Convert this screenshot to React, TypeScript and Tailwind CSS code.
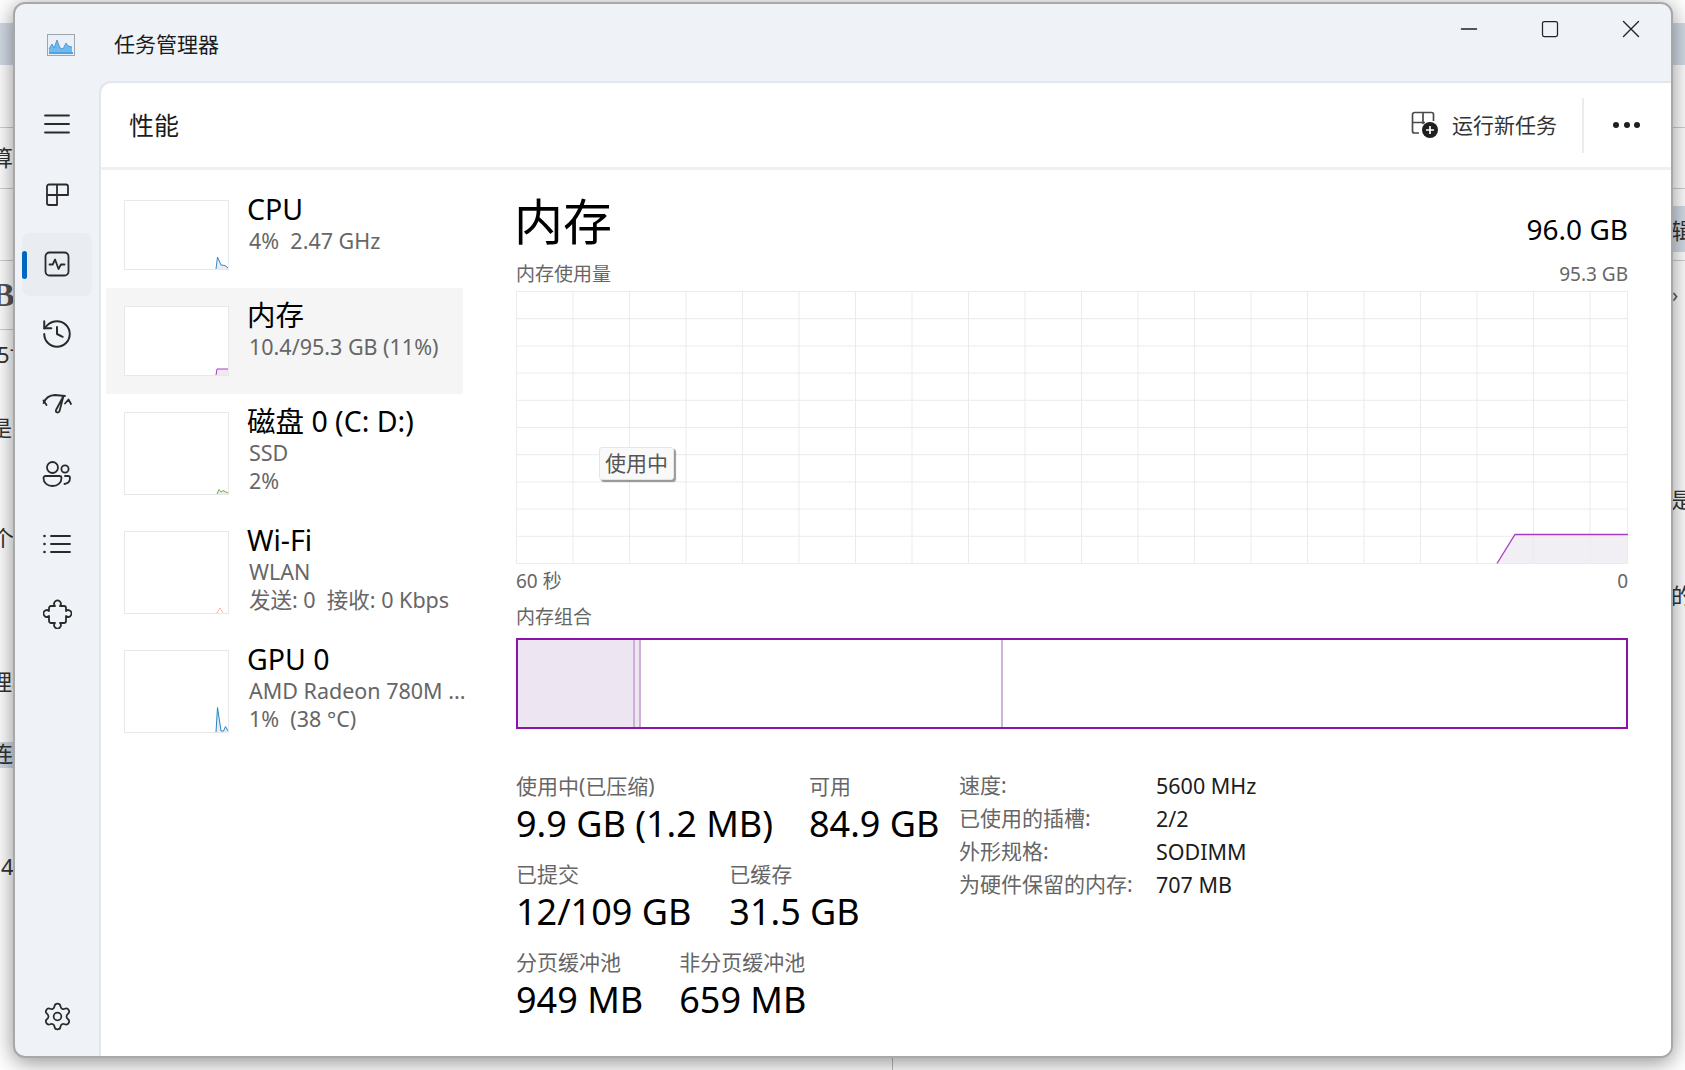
import React from 'react';
import { History, Settings, Minus, Square, X } from 'lucide-react';

const MenuIcon = () => (
  <svg width="28" height="22" viewBox="0 0 28 22" fill="none" stroke="#2a2a2a" strokeWidth="1.8" strokeLinecap="round">
    <path d="M2 2.5h24M2 11h24M2 19.5h24" />
  </svg>
);

const PanelsIcon = () => (
  <svg width="26" height="26" viewBox="0 0 26 26" fill="none" stroke="#2a2a2a" strokeWidth="1.8" strokeLinejoin="round">
    <path d="M3 5.5a2 2 0 0 1 2-2h17a2 2 0 0 1 2 2v8.5H13V3.5M3 5.5V22a2 2 0 0 0 2 2h8V14H3" />
  </svg>
);

const PulseIcon = () => (
  <svg width="26" height="26" viewBox="0 0 26 26" fill="none" stroke="#2a2a2a" strokeWidth="1.8" strokeLinejoin="round" strokeLinecap="round">
    <rect x="1.5" y="1.5" width="23" height="23" rx="4" />
    <path d="M5.5 13.5h3.2l2.4-5 3.4 9.5 2.4-4.5h3.6" />
  </svg>
);

const GaugeIcon = () => (
  <svg width="31" height="24" viewBox="0 0 31 24" fill="none" stroke="#2a2a2a" strokeWidth="1.8" strokeLinejoin="round" strokeLinecap="round">
    <path d="M1.5 11A13 13 0 0 1 13 3l10 1" />
    <path d="M1.5 8.500l3 4.500" />
    <path d="M21.5 4L14 18c-.8 2 1.600 3.500 3.400 1.500z" />
    <path d="M23 11.500l3.500-4 2.500 4.500" />
  </svg>
);

const UsersIcon = () => (
  <svg width="30" height="28" viewBox="0 0 30 28" fill="none" stroke="#2a2a2a" strokeWidth="1.8" strokeLinecap="round">
    <circle cx="10.5" cy="7.5" r="5.5" />
    <circle cx="23" cy="9" r="3.6" />
    <path d="M3.5 16h14a2 2 0 0 1 2 2c0 5-4 8-9 8s-9-3-9-8a2 2 0 0 1 2-2z" />
    <path d="M23 16h3a2 2 0 0 1 2 2c0 3-2 5.500-5.500 6" />
  </svg>
);

const ListIcon = () => (
  <svg width="30" height="20" viewBox="0 0 30 20" fill="none" stroke="#2a2a2a" strokeWidth="1.8" strokeLinecap="round">
    <path d="M9 2h19M9 10h19M9 18h19" />
    <circle cx="2.500" cy="2" r="1.300" fill="#2a2a2a" stroke="none" />
    <circle cx="2.500" cy="10" r="1.300" fill="#2a2a2a" stroke="none" />
    <circle cx="2.500" cy="18" r="1.300" fill="#2a2a2a" stroke="none" />
  </svg>
);

const PuzzleIcon = () => (
  <svg width="29" height="30" viewBox="0 0 29 30" fill="none" stroke="#2a2a2a" strokeWidth="1.8" strokeLinejoin="round">
    <path d="M12 7a3.300 3.300 0 1 1 5 0h4a2 2 0 0 1 2 2v3a3.300 3.300 0 1 1 0 5v5a2 2 0 0 1-2 2h-4a3.300 3.300 0 1 1-5 0H8a2 2 0 0 1-2-2v-5a3.300 3.300 0 1 1 0-5V9a2 2 0 0 1 2-2z" />
  </svg>
);

const RunTaskIcon = () => (
  <svg width="28" height="28" viewBox="0 0 28 28" fill="none">
    <path d="M8 22H3.500a2 2 0 0 1-2-2V3.500a2 2 0 0 1 2-2h17a2 2 0 0 1 2 2V10M12 2v11M2 11.500h10M12 11.500h2" stroke="#4a4a4a" strokeWidth="1.7" />
    <circle cx="19" cy="19" r="8" fill="#1f1f1f" />
    <path d="M19 15v8M15 19h8" stroke="#fff" strokeWidth="1.700" />
  </svg>
);

const AppIcon = () => (
  <svg width="28" height="22" viewBox="0 0 28 22">
    <rect x="0.500" y="0.500" width="27" height="21" fill="#eaf0f6" stroke="#9ea6ad" />
    <path d="M2 19V15l3-5 2 4 3-8 3 8 3 1 3-6 2 3 4 1v6z" fill="#6fb9ee" />
    <path d="M2 15l3-5 2 4 3-8 3 8 3 1 3-6 2 3 4 1" fill="none" stroke="#3a8fd0" strokeWidth="0.800" />
    <rect x="2" y="18" width="24" height="2" fill="#4ba3e3" />
  </svg>
);

type Spark = { line: string; fill?: string; stroke: string; dashed?: boolean };

const Thumb = ({ h, spark }: { h: number; spark: Spark }) => (
  <div className="w-[105px] shrink-0 border border-[#e8e8e8] bg-white" style={{ height: h }}>
    <svg width="103" height={h - 2} viewBox={`0 0 103 ${h - 2}`}>
      {spark.fill && <path d={spark.fill} fill="#eeeaf0" />}
      <path d={spark.line} fill="none" stroke={spark.stroke} strokeWidth="1" strokeDasharray={spark.dashed ? '1 1' : undefined} />
    </svg>
  </div>
);

const rows = [
  {
    key: 'cpu',
    name: 'CPU',
    sub: ['4%  2.47 GHz'],
    h: 106,
    thumb: 70,
    spark: { line: 'M91 68L92.500 56L96 64L100 64.500L103 67', fill: 'M91 68L92.500 56L96 64L100 64.500L103 67V68Z', stroke: '#2f8fc9' },
  },
  {
    key: 'mem',
    name: '内存',
    sub: ['10.4/95.3 GB (11%)'],
    h: 106,
    thumb: 70,
    active: true,
    spark: { line: 'M91 68L92 62H103', fill: 'M91 68L92 62H103V68Z', stroke: '#a93cc8' },
  },
  {
    key: 'disk',
    name: '磁盘 0 (C: D:)',
    sub: ['SSD', '2%'],
    h: 119,
    thumb: 83,
    spark: { line: 'M92 81L94 76.500L96 79L98 77.500L100 78.500L103 80', fill: 'M92 81L94 76.500L96 79L98 77.500L100 78.500L103 80V81Z', stroke: '#6db33f' },
  },
  {
    key: 'wifi',
    name: 'Wi-Fi',
    sub: ['WLAN', '发送: 0  接收: 0 Kbps'],
    h: 119,
    thumb: 83,
    spark: { line: 'M92 81L95 76L98 81', stroke: '#ef7f4d', dashed: true },
  },
  {
    key: 'gpu',
    name: 'GPU 0',
    sub: ['AMD Radeon 780M ...', '1%  (38 °C)'],
    h: 119,
    thumb: 83,
    spark: { line: 'M91 81L92.500 56.500L96 80L98.500 80L100.500 75.500L103 80', fill: 'M91 81L92.500 56.500L96 80L98.500 80L100.500 75.500L103 80V81Z', stroke: '#1f88c4' },
  },
];

const navIcons = [
  <PanelsIcon />,
  <PulseIcon />,
  <History size={34} strokeWidth={1.400} color="#2a2a2a" />,
  <GaugeIcon />,
  <UsersIcon />,
  <ListIcon />,
  <PuzzleIcon />,
];

const Stat = ({ label, value }: { label: string; value: string }) => (
  <div className="whitespace-nowrap">
    <div className="h-[27px] text-[21px] leading-[26px] text-[#666]">{label}</div>
    <div className="h-[48px] text-[36px] leading-[48px] text-black">{value}</div>
  </div>
);

const specs = [
  ['速度:', '5600 MHz'],
  ['已使用的插槽:', '2/2'],
  ['外形规格:', 'SODIMM'],
  ['为硬件保留的内存:', '707 MB'],
];

// bits of the window behind, only visible around the edges
const behindLeft = [
  { top: 142, left: -9, text: '算' },
  { top: 339, left: -3, text: '5寸' },
  { top: 412, left: -10, text: '是黄' },
  { top: 522, left: -8, text: '个日' },
  { top: 666, left: -10, text: '理程' },
  { top: 738, left: -9, text: '连接' },
  { top: 851, left: 1, text: '4' },
];

const behindRight = [
  { top: 215, left: 1671, text: '辑' },
  { top: 484, left: 1671, text: '是' },
  { top: 580, left: 1671, text: '的' },
];

export default function App() {
  const gridX = Array.from({ length: 20 }, (_, i) => 0.5 + i * 56.5);
  const gridY = Array.from({ length: 11 }, (_, i) => 0.5 + i * 27.2);

  return (
    <div className="relative h-[1070px] w-[1685px] overflow-hidden bg-white pl-[13px] pt-[2px] font-['Noto_Sans','Noto_Sans_CJK_SC',sans-serif]">
      <div className="absolute left-0 top-[23px] h-[42px] w-full bg-[#d3dbe6]" />
      <div className="absolute left-[1660px] top-[206px] h-[46px] w-[25px] bg-[#d3dbe6]" />
      <div className="absolute left-0 top-[742px] h-[26px] w-[20px] bg-[#d3dbe6]" />
      <div className="absolute left-0 top-[127px] h-px w-full bg-[#cfcfcf]" />
      <div className="absolute left-0 top-[188px] h-px w-full bg-[#cfcfcf]" />
      <div className="absolute left-0 top-[260px] h-px w-full bg-[#cfcfcf]" />
      <div className="absolute left-0 top-[329px] h-px w-[20px] bg-[#cfcfcf]" />
      <div className="absolute left-[892px] top-[1050px] h-[20px] w-px bg-[#bbb]" />
      {behindLeft.map((b) => (
        <span key={b.top} className="absolute text-[22px] leading-[30px] text-[#333]" style={{ top: b.top, left: b.left }}>
          {b.text}
        </span>
      ))}
      <span className="absolute left-[-8px] top-[275px] font-['Liberation_Serif',serif] text-[34px] font-bold leading-[40px] text-[#555]">B</span>
      <span className="absolute left-[1672px] top-[282px] text-[20px] leading-[26px] text-[#555]">›</span>
      {behindRight.map((b) => (
        <span key={b.top} className="absolute text-[22px] leading-[30px] text-[#333]" style={{ top: b.top, left: b.left }}>
          {b.text}
        </span>
      ))}

      <div className="relative flex h-[1056px] w-[1660px] flex-col overflow-hidden rounded-[12px] border-2 border-[#a8a8a8] bg-[#eff3f8] shadow-[0_4px_22px_rgba(0,0,0,0.45)]">
        {/* title bar */}
        <div className="flex h-[77px] shrink-0 items-start">
          <div className="mt-[30px] ml-[32px] flex h-[22px] items-center">
            <AppIcon />
          </div>
          <div className="ml-[39px] mt-[25px] text-[21px] leading-[30px] text-[#1c1c1c]">任务管理器</div>
          <div className="ml-auto flex">
            <div className="flex h-[50px] w-[81px] items-center justify-center">
              <Minus size={26} strokeWidth={1.200} color="#222" />
            </div>
            <div className="flex h-[50px] w-[81px] items-center justify-center">
              <Square size={20} strokeWidth={1.500} color="#222" />
            </div>
            <div className="flex h-[50px] w-[81px] items-center justify-center">
              <X size={30} strokeWidth={1.100} color="#222" />
            </div>
          </div>
        </div>

        <div className="flex min-h-0 flex-1">
          {/* sidebar */}
          <div className="flex w-[84px] shrink-0 flex-col pt-[8px] pb-[5px]">
            <div className="flex h-[70px] items-center justify-center">
              <MenuIcon />
            </div>
            {navIcons.map((icon, i) => (
              <div key={i} className="flex h-[70px] items-center px-[7px]">
                <div className={`relative flex h-[63px] w-full items-center justify-center rounded-[8px] ${i === 1 ? 'bg-[#e9edf2]' : ''}`}>
                  {i === 1 && <div className="absolute left-0 top-[18px] h-[28px] w-[5px] rounded-full bg-[#0067c0]" />}
                  {icon}
                </div>
              </div>
            ))}
            <div className="mt-auto flex h-[70px] items-center justify-center">
              <Settings size={31} strokeWidth={1.350} color="#2a2a2a" />
            </div>
          </div>

          {/* main panel */}
          <div className="flex min-w-0 flex-1 flex-col rounded-tl-[12px] border-l-2 border-t-2 border-[#e2e7ed] bg-white">
            <div className="flex h-[87px] shrink-0 items-center border-b-[3px] border-[#f0f0f0] pl-[28px]">
              <div className="text-[25px] leading-[34px] text-[#1c1c1c]">性能</div>
              <div className="ml-auto flex items-center">
                <RunTaskIcon />
                <div className="ml-[13px] text-[21px] leading-[30px] text-[#333]">运行新任务</div>
                <div className="ml-[25px] h-[55px] w-[2px] bg-[#ececec]" />
                <div className="ml-[29px] mr-[31px] flex gap-[4.500px]">
                  <div className="h-[6px] w-[6px] rounded-full bg-[#1f1f1f]" />
                  <div className="h-[6px] w-[6px] rounded-full bg-[#1f1f1f]" />
                  <div className="h-[6px] w-[6px] rounded-full bg-[#1f1f1f]" />
                </div>
              </div>
            </div>

            <div className="flex min-h-0 flex-1">
              {/* device list */}
              <div className="w-[415px] shrink-0 pl-[5px] pt-[12px]">
                {rows.map((r) => (
                  <div
                    key={r.key}
                    className={`flex w-[357px] items-start gap-[18px] whitespace-nowrap pl-[18px] pt-[18px] ${r.active ? 'bg-[#f5f5f5]' : ''}`}
                    style={{ height: r.h }}
                  >
                    <Thumb h={r.thumb} spark={r.spark} />
                    <div className="-mt-[9px]">
                      <div className="h-[36px] text-[28.500px] leading-[36px] text-black">{r.name}</div>
                      {r.sub.map((s) => (
                        <div key={s} className="ml-[2px] h-[28px] whitespace-pre text-[21.500px] leading-[28px] text-[#666]">
                          {s}
                        </div>
                      ))}
                    </div>
                  </div>
                ))}
              </div>

              {/* detail */}
              <div className="w-[1112px] pt-[21px]">
                <div className="flex h-[60px] items-end justify-between">
                  <div className="-ml-[2px] text-[49px] leading-[60px] text-black">内存</div>
                  <div className="mb-[4px] text-[28px] leading-[36px] text-black">96.0 GB</div>
                </div>
                <div className="mt-[11px] flex h-[24px] justify-between text-[19px] leading-[24px] text-[#666]">
                  <div>内存使用量</div>
                  <div>95.3 GB</div>
                </div>

                <div className="relative mt-[5px] h-[274px]">
                  <svg width="1112" height="274" viewBox="0 0 1112 274" className="block">
                    <path d="M981 272.500L999 243.500H1111.500V272.500Z" fill="#f1eff3" />
                    {gridX.map((x) => (
                      <line key={x} x1={x} y1="0" x2={x} y2="273" stroke="#ebebeb" strokeWidth="1" />
                    ))}
                    <line x1="1111.500" y1="0" x2="1111.500" y2="273" stroke="#ebebeb" strokeWidth="1" />
                    {gridY.map((y) => (
                      <line key={y} x1="0" y1={y} x2="1112" y2={y} stroke="#ebebeb" strokeWidth="1" />
                    ))}
                    <path d="M981 272.500L999 243.500H1112" fill="none" stroke="#a93cc8" strokeWidth="1.300" />
                  </svg>
                  <div className="absolute left-[83px] top-[156px] h-[33px] w-[75px] rounded-[3px] border border-[#e6e6e6] bg-[#f9f9f9] text-center text-[21px] leading-[31px] text-[#555] shadow-[2px_2px_1px_rgba(0,0,0,0.4)]">
                    使用中
                  </div>
                </div>

                <div className="mt-[4px] flex h-[24px] justify-between text-[19px] leading-[24px] text-[#666]">
                  <div>60 秒</div>
                  <div>0</div>
                </div>
                <div className="mt-[12px] h-[24px] text-[19px] leading-[24px] text-[#666]">内存组合</div>

                <div className="mt-[9px] flex h-[91px] border-2 border-[#8a14aa]">
                  <div className="w-[115px] bg-[#ede5f1]" />
                  <div className="w-[2px] bg-[#cfaed9]" />
                  <div className="w-[4px] bg-[#ede5f1]" />
                  <div className="w-[2px] bg-[#cfaed9]" />
                  <div className="w-[360px]" />
                  <div className="w-[2px] bg-[#ccb5d9]" />
                </div>

                <div className="mt-[44px] flex">
                  <div className="flex w-[443px] shrink-0 flex-col gap-[13px]">
                    <div className="flex gap-[36px]">
                      <Stat label="使用中(已压缩)" value="9.9 GB (1.2 MB)" />
                      <Stat label="可用" value="84.9 GB" />
                    </div>
                    <div className="flex gap-[38px]">
                      <Stat label="已提交" value="12/109 GB" />
                      <Stat label="已缓存" value="31.5 GB" />
                    </div>
                    <div className="flex gap-[36px]">
                      <Stat label="分页缓冲池" value="949 MB" />
                      <Stat label="非分页缓冲池" value="659 MB" />
                    </div>
                  </div>
                  <div className="-mt-[4px]">
                    {specs.map(([k, v]) => (
                      <div key={k} className="flex h-[33px] text-[21px] leading-[33px]">
                        <div className="w-[197px] whitespace-nowrap text-[#666]">{k}</div>
                        <div className="text-[21.500px] text-[#1c1c1c]">{v}</div>
                      </div>
                    ))}
                  </div>
                </div>
              </div>
            </div>
          </div>
        </div>
      </div>
    </div>
  );
}
